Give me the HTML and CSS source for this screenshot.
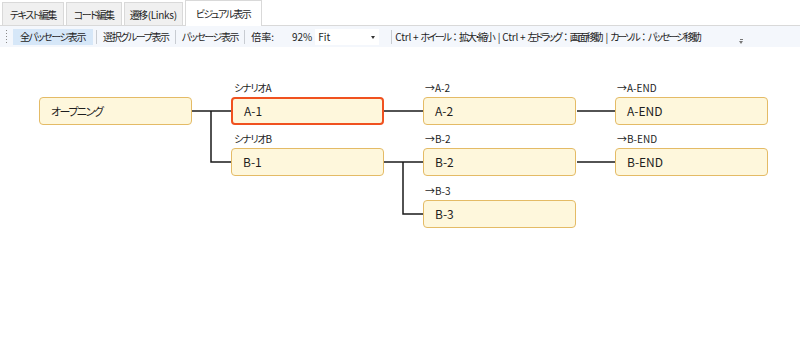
FILE: index.html
```html
<!DOCTYPE html>
<html lang="ja">
<head>
    <meta charset="UTF-8">
    <title>ビジュアル表示</title>
    <link rel="stylesheet" href="styles.css">
</head>
<body>
    <div class="tabs">
        <div class="tab">テキスト編集</div>
        <div class="tab">コード編集</div>
        <div class="tab links-tab"><span class="jp">遷移</span>(Links)</div>
        <div class="tab active">ビジュアル表示</div>
    </div>
    <div class="toolbar">
        <span class="grip"></span>
        <span class="tool selected">全パッセージ表示</span>
        <span class="sep"></span>
        <span class="tool">選択グループ表示</span>
        <span class="sep"></span>
        <span class="tool">パッセージ表示</span>
        <span class="sep"></span>
        <span class="tool zoom-label">倍率:</span>
        <span class="zoom-value">92%</span>
        <span class="combo">Fit<span class="arrow"></span></span>
        <span class="sep"></span>
        <span class="hint">Ctrl + <span class="jp">ホイール<span class="colon">：</span>拡大・縮小</span> | Ctrl + <span class="jp">左ドラッグ<span class="colon">：</span>画面移動</span> | <span class="jp">カーソル<span class="colon">：</span>パッセージ移動</span></span>
        <span class="overflow"></span>
    </div>
    <div class="canvas">
        <svg class="links" width="800" height="298">
            <g stroke="#1a1a1a" stroke-width="1.5" fill="none">
                <path d="M191 64 H231"/>
                <path d="M211 64 V115 H231"/>
                <path d="M384 64 H423"/>
                <path d="M384 115 H423"/>
                <path d="M403 115 V167 H423"/>
                <path d="M577 64 H615"/>
                <path d="M577 115 H615"/>
            </g>
        </svg>

        <div class="node jp" style="left:39px;top:50px">オープニング</div>

        <div class="label jp" style="left:234px;top:35px">シナリオA</div>
        <div class="node current" style="left:231px;top:50px">A-1</div>
        <div class="label jp" style="left:234px;top:86px">シナリオB</div>
        <div class="node" style="left:231px;top:101px">B-1</div>

        <div class="label" style="left:425px;top:35px">→A-2</div>
        <div class="node" style="left:423px;top:50px">A-2</div>
        <div class="label" style="left:425px;top:86px">→B-2</div>
        <div class="node" style="left:423px;top:101px">B-2</div>
        <div class="label" style="left:425px;top:138px">→B-3</div>
        <div class="node" style="left:423px;top:153px">B-3</div>

        <div class="label" style="left:617px;top:35px">→A-END</div>
        <div class="node" style="left:615px;top:50px">A-END</div>
        <div class="label" style="left:617px;top:86px">→B-END</div>
        <div class="node" style="left:615px;top:101px">B-END</div>
    </div>
</body>
</html>
```

FILE: styles.css
```css
body {
    margin: 0;
    font-family: "Noto Sans CJK JP", "Noto Sans", sans-serif;
    font-feature-settings: "palt";
    color: #1e1e1e;
    background: #fff;
    width: 800px;
    height: 345px;
    overflow: hidden;
}
.tabs {
    display: flex;
    align-items: flex-end;
    height: 26px;
    padding-left: 2px;
    gap: 2px;
    border-bottom: 1px solid #d9d9d9;
    box-sizing: border-box;
}
.tab {
    height: 23px;
    padding: 0 7px;
    display: flex;
    align-items: center;
    font-size: 10px;
    letter-spacing: -1.5px;
    white-space: nowrap;
    background: #f0f0f0;
    border: 1px solid #d9d9d9;
    border-bottom: none;
    box-sizing: border-box;
}
.tab.links-tab {
    letter-spacing: -0.3px;
    padding: 0 5px;
}
.tab .jp {
    letter-spacing: -1.5px;
    margin-right: 1px;
}
.tab.active {
    height: 26px;
    margin-bottom: -1px;
    padding: 0 11px 0 10px;
    background: #fff;
}
.toolbar {
    display: flex;
    align-items: center;
    height: 21px;
    padding-left: 5px;
    background: #f4f7fc;
    font-size: 10px;
    white-space: nowrap;
}
.toolbar > span {
    flex-shrink: 0;
}
.grip {
    width: 3px;
    height: 15px;
    margin-right: 5px;
    background-image: radial-gradient(#8a8a8a 0.7px, transparent 0.9px);
    background-size: 3px 3px;
}
.tool {
    padding: 0 3px;
    line-height: 16px;
    letter-spacing: -1.4px;
}
.tool.selected {
    background: #d6e7f8;
    padding: 0 8px 0 7px;
}
.sep {
    width: 1px;
    height: 14px;
    background: #c8ccd2;
    margin: 0 3px;
}
.zoom-label {
    letter-spacing: 0;
    margin-right: 15px;
}
.zoom-value {
    margin-right: 3px;
}
.combo {
    position: relative;
    width: 61px;
    height: 16px;
    padding-left: 3px;
    line-height: 16px;
    background: #fff;
    margin-right: 9px;
}
.combo .arrow {
    position: absolute;
    right: 4px;
    top: 7px;
    border-left: 2.5px solid transparent;
    border-right: 2.5px solid transparent;
    border-top: 3px solid #333;
}
.hint {
    letter-spacing: -0.2px;
}
.hint .jp {
    letter-spacing: -2.05px;
    margin-right: 2px;
}
.hint .colon {
    font-feature-settings: normal;
    letter-spacing: -1px;
}
.overflow {
    margin-left: 38px;
    margin-top: 10px;
    width: 3px;
    height: 5px;
    border-top: 1px solid #777;
    position: relative;
}
.overflow::after {
    content: "";
    position: absolute;
    left: -1px;
    top: 1px;
    border-left: 2.5px solid transparent;
    border-right: 2.5px solid transparent;
    border-top: 3px solid #777;
}
.canvas {
    position: relative;
    height: 298px;
}
.links {
    position: absolute;
    left: 0;
    top: 0;
}
.node {
    position: absolute;
    width: 153px;
    height: 28px;
    box-sizing: border-box;
    padding-left: 11px;
    line-height: 26px;
    font-size: 12px;
    background: #fef7dc;
    border: 1.5px solid #e4bb66;
    border-radius: 4px;
}
.node.jp {
    font-size: 11px;
    letter-spacing: -1.5px;
}
.node.current {
    border: 2px solid #f0511f;
    padding-left: 11px;
    line-height: 24px;
}
.label {
    position: absolute;
    font-size: 10px;
    line-height: 12px;
}
.label.jp {
    letter-spacing: -1.2px;
}
```
